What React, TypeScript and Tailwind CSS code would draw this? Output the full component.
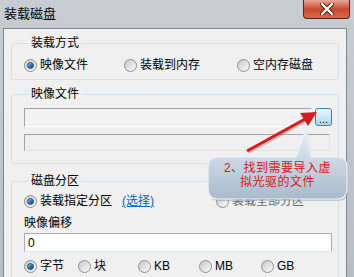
import React from "react";

function Radio({ checked = false }: { checked?: boolean }) {
  return (
    <span className="relative w-[13px] h-[13px] rounded-full border border-[#8e8f8f] bg-gradient-to-br from-[#c9c9c9] to-[#fbfbfb] flex items-center justify-center shrink-0">
      {checked && (
        <span className="w-[7px] h-[7px] rounded-full bg-gradient-to-br from-[#9fd0f2] via-[#2a7ab8] to-[#0d3c66] border border-[#1b4d77]" />
      )}
    </span>
  );
}

function RadioItem({ label, checked, className = "" }: { label: string; checked?: boolean; className?: string }) {
  return (
    <div className={"flex items-center gap-[3px] h-[14px] " + className}>
      <Radio checked={checked} />
      <span className="text-[12px] leading-[14px] whitespace-nowrap">{label}</span>
    </div>
  );
}

export default function App() {
  return (
    <div className="relative w-[354px] h-[277px] overflow-hidden bg-gradient-to-b from-[#c7cdd2] to-[#b6bec6] text-black font-['Liberation_Sans','Noto_Sans_CJK_SC',sans-serif]">
      {/* title bar */}
      <div className="h-[28px] flex items-start">
        <span className="ml-[4px] mt-[7px] text-[13px] leading-[14px]">装载磁盘</span>
        <div className="ml-auto mr-[4px] w-[47px] h-[19px] rounded-b-[4px] border border-t-0 border-[#5a2018] bg-gradient-to-b from-[#e9a99a] via-[#c9472f] to-[#d7684f] flex items-center justify-center">
          <svg width="14" height="12" viewBox="0 0 14 12">
            <path d="M2 1 L12 11 M12 1 L2 11" stroke="#4a1a12" strokeWidth="4.2" strokeLinecap="round" />
            <path d="M2 1 L12 11 M12 1 L2 11" stroke="#ffffff" strokeWidth="2.4" strokeLinecap="round" />
          </svg>
        </div>
      </div>

      {/* client area */}
      <div className="ml-[3px] mr-[7px] h-[249px] border-t border-l border-r border-[#7d8891] bg-[#f0f0f0] px-[7px] pt-[7px]">
        <fieldset className="border border-[#d5dfe5] rounded-[3px] pl-[12px] pb-[7px]">
          <legend className="ml-[5px] px-[2px] text-[12px] leading-[14px]">装载方式</legend>
          <div className="flex mt-[8px]">
            <RadioItem label="映像文件" checked className="w-[100px]" />
            <RadioItem label="装载到内存" className="w-[113px]" />
            <RadioItem label="空内存磁盘" />
          </div>
        </fieldset>

        <fieldset className="mt-[7px] border border-[#d5dfe5] rounded-[3px] pl-[12px] pb-[12px]">
          <legend className="ml-[5px] px-[2px] text-[12px] leading-[14px]">映像文件</legend>
          <div className="flex items-start mt-[7px]">
            <div className="w-[288px] h-[19px] border border-t-[#a4a4a4] border-l-[#a4a4a4] border-b-white border-r-white bg-[#f2f2f2]" />
            <div className="ml-[3px] w-[17px] h-[18px] rounded-[3px] border border-[#3c7fb1] bg-gradient-to-b from-[#eaf6fd] to-[#a7d9f5] flex items-end justify-center">
              <span className="text-[11px] leading-[12px]">...</span>
            </div>
          </div>
          <div className="mt-[7px] w-[306px] h-[17px] border border-t-[#a4a4a4] border-l-[#a4a4a4] border-b-[#e2e2e2] border-r-[#e2e2e2] bg-[#f0f0f0]" />
        </fieldset>

        <fieldset className="mt-[10px] border border-[#d5dfe5] rounded-[3px] pl-[12px] pb-[10px]">
          <legend className="ml-[5px] px-[2px] text-[12px] leading-[14px]">磁盘分区</legend>
          <div className="flex items-center mt-[6px]">
            <RadioItem label="装载指定分区" checked />
            <span className="ml-[10px] text-[12px] leading-[14px] text-[#0066cc] underline">(选择)</span>
            <RadioItem label="装载全部分区" className="ml-[62px] text-[#6d6d6d]" />
          </div>
          <div className="mt-[8px] text-[12px] leading-[14px]">映像偏移</div>
          <div className="mt-[3px] w-[308px] h-[19px] border border-[#abadb3] border-b-[#e3e9ef] bg-white flex items-center pl-[3px]">
            <span className="text-[12px] leading-[14px]">0</span>
          </div>
          <div className="flex mt-[7px]">
            <RadioItem label="字节" checked className="w-[54px]" />
            <RadioItem label="块" className="w-[60px]" />
            <RadioItem label="KB" className="w-[61px]" />
            <RadioItem label="MB" className="w-[62px]" />
            <RadioItem label="GB" />
          </div>
        </fieldset>
      </div>

      {/* annotation: arrow + callout */}
      <svg className="absolute left-0 top-0 pointer-events-none" width="354" height="277" viewBox="0 0 354 277">
        <defs>
          <linearGradient id="bub" x1="0" y1="0" x2="0" y2="1">
            <stop offset="0" stopColor="#e8eef5" />
            <stop offset="0.5" stopColor="#c8d5e2" />
            <stop offset="1" stopColor="#a8bacc" />
          </linearGradient>
        </defs>
        <path
          d="M218 157 L296 157 L306 129 L311 157 L337 157 Q347 157 347 167 L347 188 Q347 199 337 199 L218 199 Q208 199 208 188 L208 167 Q208 157 218 157 Z"
          fill="#6f7f90"
          opacity="0.35"
          transform="translate(1 2)"
        />
        <path
          d="M218 157 L296 157 L306 129 L311 157 L337 157 Q347 157 347 167 L347 188 Q347 199 337 199 L218 199 Q208 199 208 188 L208 167 Q208 157 218 157 Z"
          fill="url(#bub)"
          stroke="#eef3f8"
          strokeWidth="1.2"
        />
        <line x1="247" y1="151" x2="307" y2="118" stroke="#7a1010" strokeWidth="4" opacity="0.25" transform="translate(1 1)" />
        <line x1="247" y1="151" x2="307" y2="118" stroke="#d61c1c" strokeWidth="3" />
        <polygon points="317,112 300,113 308,126" fill="#d61c1c" />
      </svg>
      <div className="absolute left-[208px] top-[161px] w-[139px] flex flex-col items-center text-[12px] leading-[14px] tracking-[0.5px] text-[#e0101a]">
        <span>2、找到需要导入虚</span>
        <span>拟光驱的文件</span>
      </div>
    </div>
  );
}
